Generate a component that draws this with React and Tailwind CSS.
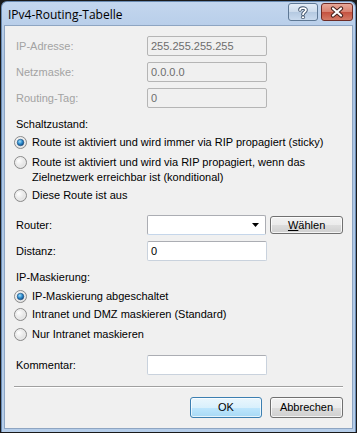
import React from "react";

const font = { fontFamily: '"Liberation Sans", Arial, sans-serif' };

function Radio({ checked }) {
  return (
    <svg width="13" height="13" viewBox="0 0 13 13" className="shrink-0">
      <defs>
        <radialGradient id="rbg" cx="0.35" cy="0.35" r="0.8">
          <stop offset="0" stopColor="#ffffff" />
          <stop offset="1" stopColor="#d4d4d4" />
        </radialGradient>
        <radialGradient id="rdot" cx="0.4" cy="0.35" r="0.7">
          <stop offset="0" stopColor="#a8dcf7" />
          <stop offset="0.5" stopColor="#2d8fd0" />
          <stop offset="1" stopColor="#0b3f7a" />
        </radialGradient>
      </defs>
      <circle cx="6.5" cy="6.5" r="6" fill="url(#rbg)" stroke="#8a8a8a" />
      <circle cx="6.5" cy="6.5" r="4.5" fill="none" stroke="#ececec" />
      {checked && <circle cx="6.5" cy="6.5" r="3.3" fill="url(#rdot)" stroke="#1e4f80" strokeWidth="0.6" />}
    </svg>
  );
}

function RadioItem({ checked, children, className = "" }) {
  return (
    <div className={`flex items-start gap-[5px] ${className}`}>
      <div className="pt-[1px]">
        <Radio checked={checked} />
      </div>
      <div className="leading-[15px] text-black">{children}</div>
    </div>
  );
}

function Field({ label, value, disabled, className = "" }) {
  return (
    <div className={`flex items-center h-[20px] ${className}`}>
      <div className={`w-[133px] pl-[2px] ${disabled ? "text-[#a3a3a3]" : "text-black"}`}>{label}</div>
      <div
        className={`w-[120px] h-[20px] flex items-center px-[3px] border rounded-[2px] ${
          disabled
            ? "bg-[#f0f0f0] border-[#b5b5b5] text-[#6d6d6d]"
            : "bg-white border-[#c9d2dd] border-t-[#abadb3] text-black"
        }`}
      >
        {value}
      </div>
    </div>
  );
}

function Button({ children, def, className = "" }) {
  return (
    <div
      className={`flex items-center justify-center rounded-[3px] border text-black ${
        def
          ? "border-[#3c7fb1] bg-[linear-gradient(#eaf6fd_0%,#d9f0fc_50%,#bee6fd_51%,#a7d9f5_100%)] shadow-[inset_0_0_0_1px_#ffffffb0]"
          : "border-[#707070] bg-[linear-gradient(#f2f2f2_0%,#ebebeb_50%,#dddddd_51%,#cfcfcf_100%)] shadow-[inset_0_0_0_1px_#ffffffc0]"
      } ${className}`}
    >
      {children}
    </div>
  );
}

export default function App() {
  return (
    <div className="w-[357px] h-[433px] bg-[#1a1a1a] p-[1px]" style={font}>
      <div className="w-full h-full flex flex-col bg-[linear-gradient(#c3d6ee,#a9c3e3_60px,#b5cde9)] rounded-t-[6px] border border-[#6a8bb3] border-b-0">
        {/* title bar */}
        <div className="h-[23px] flex items-start justify-between pl-[6px] pr-[2px]">
          <div className="text-[12px] leading-[15px] mt-[5px] text-black" style={{ fontFamily: '"Open Sans", "Noto Sans", sans-serif' }}>
            IPv4-Routing-Tabelle
          </div>
          <div className="flex gap-[3px] mt-[1px]">
            <div className="w-[30px] h-[18px] rounded-[3px] border border-[#5e7895] bg-[linear-gradient(#e4edf7_0%,#cbdaeb_50%,#b4c9e1_51%,#c9daee_100%)] flex items-center justify-center">
              <svg width="12" height="13" viewBox="0 0 12 13">
                <path d="M3 4 C3 1.5 9 1.5 9 4 C9 6 6 6 6 8.5" fill="none" stroke="#3b4f68" strokeWidth="3.6" strokeLinecap="round" />
                <path d="M3 4 C3 1.5 9 1.5 9 4 C9 6 6 6 6 8.5" fill="none" stroke="#ffffff" strokeWidth="1.8" strokeLinecap="round" />
                <circle cx="6" cy="11.3" r="1.6" fill="#ffffff" stroke="#3b4f68" strokeWidth="0.9" />
              </svg>
            </div>
            <div className="w-[32px] h-[18px] rounded-[3px] border border-[#6e2b25] bg-[linear-gradient(#e8a899_0%,#d7806f_50%,#c4513f_51%,#d47a66_100%)] flex items-center justify-center">
              <svg width="14" height="12" viewBox="0 0 14 12">
                <path d="M3 2.5 L11 9.5 M11 2.5 L3 9.5" stroke="#47221d" strokeWidth="4.2" strokeLinecap="round" />
                <path d="M3 2.5 L11 9.5 M11 2.5 L3 9.5" stroke="#ffffff" strokeWidth="2.2" strokeLinecap="round" />
              </svg>
            </div>
          </div>
        </div>
        {/* content */}
        <div className="flex-1 mx-[2px] mb-[3px] bg-[#f0f0f0] border border-[#8ea5c2] pl-[9px] pr-[9px] text-[11px] leading-[13px]">
          <Field label="IP-Adresse:" value="255.255.255.255" disabled className="mt-[10px]" />
          <Field label="Netzmaske:" value="0.0.0.0" disabled className="mt-[6px]" />
          <Field label="Routing-Tag:" value="0" disabled className="mt-[6px]" />

          <div className="mt-[10px] pl-[2px] text-black">Schaltzustand:</div>
          <RadioItem checked className="mt-[4px]">Route ist aktiviert und wird immer via RIP propagiert (sticky)</RadioItem>
          <RadioItem className="mt-[5px]">
            Route ist aktiviert und wird via RIP propagiert, wenn das
            <br />
            Zielnetzwerk erreichbar ist (konditional)
          </RadioItem>
          <RadioItem className="mt-[3px]">Diese Route ist aus</RadioItem>

          <div className="flex items-center h-[20px] mt-[12px]">
            <div className="w-[133px] pl-[2px] text-black">Router:</div>
            <div className="w-[120px] h-[20px] bg-white border border-[#abadb3] border-b-[#c5d6ea] rounded-[2px] flex items-center justify-end pr-[6px]">
              <svg width="7" height="4" viewBox="0 0 7 4">
                <path d="M0 0 H7 L3.5 4 Z" fill="#000" />
              </svg>
            </div>
            <Button className="ml-[4px] w-[73px] h-[18px]">
              <span>
                <span className="underline">W</span>ählen
              </span>
            </Button>
          </div>
          <div className="flex items-center h-[20px] mt-[6px]">
            <div className="w-[133px] pl-[2px] text-black">Distanz:</div>
            <div className="w-[120px] h-[20px] bg-white border border-[#c9d2dd] border-t-[#abadb3] rounded-[2px] flex items-center px-[3px] text-black">0</div>
          </div>

          <div className="mt-[10px] pl-[2px] text-black">IP-Maskierung:</div>
          <RadioItem checked className="mt-[5px]">IP-Maskierung abgeschaltet</RadioItem>
          <RadioItem className="mt-[3px]">Intranet und DMZ maskieren (Standard)</RadioItem>
          <RadioItem className="mt-[5px]">Nur Intranet maskieren</RadioItem>

          <div className="flex items-center h-[20px] mt-[13px]">
            <div className="w-[133px] pl-[2px] text-black">Kommentar:</div>
            <div className="w-[120px] h-[20px] bg-white border border-[#c9d2dd] border-t-[#abadb3] rounded-[2px]" />
          </div>

          <div className="mt-[11px] border-t border-[#a0a0a0] border-b border-b-white" />

          <div className="mt-[9px] flex justify-end gap-[8px]">
            <Button def className="w-[72px] h-[21px]">OK</Button>
            <Button className="w-[73px] h-[21px]">Abbrechen</Button>
          </div>
        </div>
      </div>
    </div>
  );
}
